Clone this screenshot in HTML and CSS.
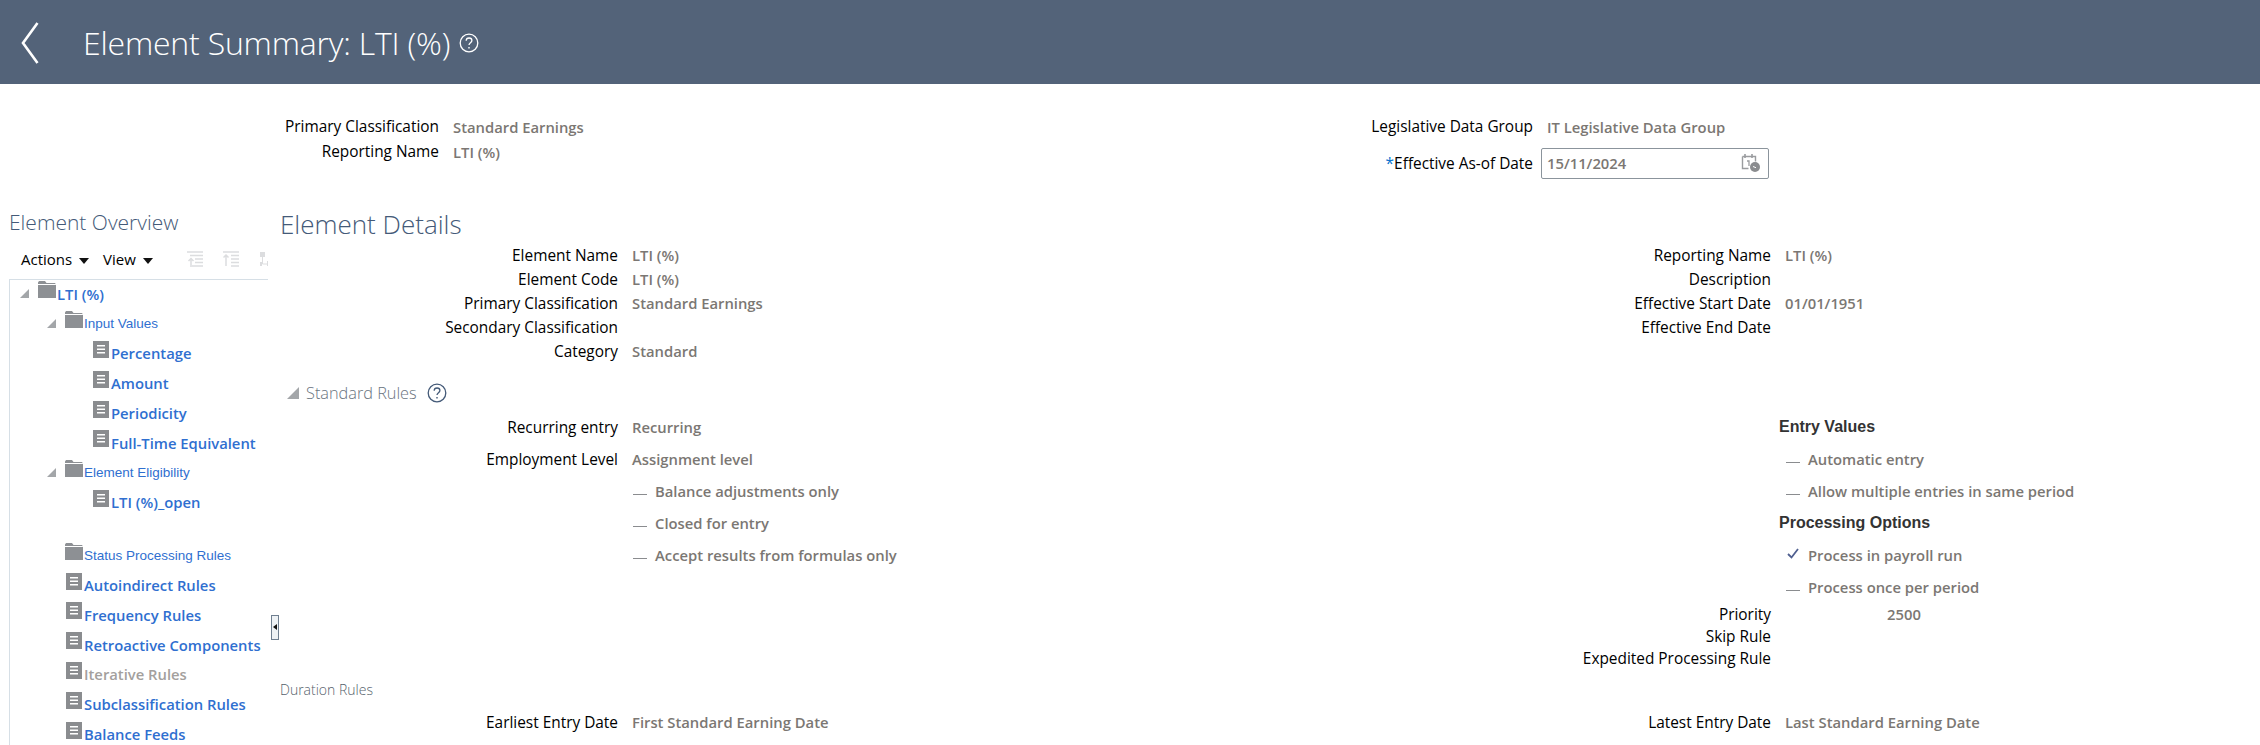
FILE: index.html
```html
<!DOCTYPE html>
<html lang="en">
<head>
  <meta charset="UTF-8" />
  <meta name="viewport" content="width=device-width, initial-scale=1" />
  <title>Element Summary: LTI (%)</title>
  <link rel="stylesheet" href="styles.css">
</head>
<body>
  <svg class="sprites" aria-hidden="true">
    <symbol id="i-folder" viewBox="0 0 18 17">
      <path d="M0 3V1.5L1 0h6l1.5 2H17l1 1.5V3z" fill="#8d9094"/>
      <path d="M0 4h18v13H0z" fill="#8d9094"/>
    </symbol>
    <symbol id="i-doc" viewBox="0 0 16 17">
      <path d="M0 0h16v17H0z" fill="#8a8c8f"/>
      <path d="M4 4h8v1.4H4zM4 7.5h8v1.4H4zM4 11h8v1.4H4z" fill="#fff"/>
    </symbol>
    <symbol id="i-twisty" viewBox="0 0 9 9">
      <path d="M9 0v9H0z" fill="#a3a6a9"/>
    </symbol>
    <symbol id="i-help" viewBox="0 0 20 20">
      <circle cx="10" cy="10" r="8.8" fill="none" stroke="currentColor" stroke-width="1.3"/>
      <path d="M7.2 7.8c0-1.7 1.2-2.8 2.9-2.8s2.8 1 2.8 2.4c0 2.3-2.9 2.3-2.9 4.7" fill="none" stroke="currentColor" stroke-width="1.3"/>
      <path d="M9.3 14h1.4v1.5H9.3z" fill="currentColor"/>
    </symbol>
  </svg>

  <header class="topbar">
    <svg class="back" viewBox="0 0 18 42"><path d="M16.5 1 2 21l14.5 20" fill="none" stroke="#fff" stroke-width="2.6"/></svg>
    <h1>Element Summary: LTI (%)</h1>
    <svg class="help-top"><use href="#i-help"/></svg>
  </header>

  <section class="summary">
    <div class="form-grid summary-left">
      <span class="lbl">Primary Classification</span><span class="val">Standard Earnings</span>
      <span class="lbl">Reporting Name</span><span class="val">LTI (%)</span>
    </div>
    <div class="form-grid summary-right">
      <span class="lbl">Legislative Data Group</span><span class="val">IT Legislative Data Group</span>
      <span class="lbl"><span class="req">*</span>Effective As-of Date</span>
      <div class="date-input">
        <span class="val">15/11/2024</span>
        <svg class="cal" viewBox="0 0 20 20">
          <path d="M1.5 3.5h13v5M1.5 3.5v12h6" fill="none" stroke="#9a9c9f" stroke-width="1.4"/>
          <path d="M4 1v4M11 1v4" stroke="#9a9c9f" stroke-width="1.6"/>
          <path d="M6 8h2v5" fill="none" stroke="#9a9c9f" stroke-width="1.3"/>
          <circle cx="14" cy="14" r="5" fill="#8a8c8f"/>
          <path d="M12 13.5l3 1.2" stroke="#fff" stroke-width="1"/>
        </svg>
      </div>
    </div>
  </section>

  <div class="columns">
    <aside class="overview">
      <h2 class="overview-title">Element Overview</h2>
      <div class="toolbar">
        <span class="menu">Actions <i class="caret"></i></span>
        <span class="menu">View <i class="caret"></i></span>
        <svg class="tool" viewBox="0 0 16 16"><path d="M0 1h16M3 4.5h13M8 8h8M8 11.5h8M3 15h13M4 7v7M1.5 10 4 7.5 6.5 10" fill="none" stroke="#dcdddf" stroke-width="1.5"/></svg>
        <svg class="tool" viewBox="0 0 16 16"><path d="M0 1h16M8 4.5h8M8 8h8M8 11.5h8M8 15h8M3 4v11M.5 6.5 3 4l2.5 2.5" fill="none" stroke="#dcdddf" stroke-width="1.5"/></svg>
        <svg class="tool" viewBox="0 0 16 16"><path d="M1 1h5v5H1zM10 1h2v2h-2zM1 11h2v4H1zM8 10h5v5H8z" fill="#dcdddf"/><path d="M3.5 6v7H8" fill="none" stroke="#dcdddf"/></svg>
      </div>
      <ul class="tree">
        <li class="node lvl0"><svg class="twisty"><use href="#i-twisty"/></svg><svg class="folder"><use href="#i-folder"/></svg><a class="link-root">LTI (%)</a></li>
        <li class="node lvl1"><svg class="twisty"><use href="#i-twisty"/></svg><svg class="folder"><use href="#i-folder"/></svg><a class="link-group">Input Values</a></li>
        <li class="node lvl2"><svg class="doc"><use href="#i-doc"/></svg><a class="link">Percentage</a></li>
        <li class="node lvl2"><svg class="doc"><use href="#i-doc"/></svg><a class="link">Amount</a></li>
        <li class="node lvl2"><svg class="doc"><use href="#i-doc"/></svg><a class="link">Periodicity</a></li>
        <li class="node lvl2"><svg class="doc"><use href="#i-doc"/></svg><a class="link">Full-Time Equivalent</a></li>
        <li class="node lvl1"><svg class="twisty"><use href="#i-twisty"/></svg><svg class="folder"><use href="#i-folder"/></svg><a class="link-group">Element Eligibility</a></li>
        <li class="node lvl2"><svg class="doc"><use href="#i-doc"/></svg><a class="link">LTI (%)_open</a></li>
        <li class="node lvl1 node-gap"><span class="twisty"></span><svg class="folder"><use href="#i-folder"/></svg><a class="link-group">Status Processing Rules</a></li>
        <li class="node lvl1b"><svg class="doc"><use href="#i-doc"/></svg><a class="link">Autoindirect Rules</a></li>
        <li class="node lvl1b"><svg class="doc"><use href="#i-doc"/></svg><a class="link">Frequency Rules</a></li>
        <li class="node lvl1b"><svg class="doc"><use href="#i-doc"/></svg><a class="link">Retroactive Components</a></li>
        <li class="node lvl1b"><svg class="doc"><use href="#i-doc"/></svg><a class="link disabled">Iterative Rules</a></li>
        <li class="node lvl1b"><svg class="doc"><use href="#i-doc"/></svg><a class="link">Subclassification Rules</a></li>
        <li class="node lvl1b"><svg class="doc"><use href="#i-doc"/></svg><a class="link">Balance Feeds</a></li>
      </ul>
    </aside>

    <div class="splitter-col"><button class="splitter" aria-label="Collapse pane"></button></div>

    <main class="details">
      <h2 class="details-title">Element Details</h2>
      <div class="two-col">
        <div class="form-grid col-left rows-24">
          <span class="lbl">Element Name</span><span class="val">LTI (%)</span>
          <span class="lbl">Element Code</span><span class="val">LTI (%)</span>
          <span class="lbl">Primary Classification</span><span class="val">Standard Earnings</span>
          <span class="lbl">Secondary Classification</span><span class="val"></span>
          <span class="lbl">Category</span><span class="val">Standard</span>
        </div>
        <div class="form-grid col-right rows-24">
          <span class="lbl">Reporting Name</span><span class="val">LTI (%)</span>
          <span class="lbl">Description</span><span class="val"></span>
          <span class="lbl">Effective Start Date</span><span class="val">01/01/1951</span>
          <span class="lbl">Effective End Date</span><span class="val"></span>
        </div>
      </div>

      <div class="section-head">
        <svg class="twisty-lg"><use href="#i-twisty"/></svg>
        <span>Standard Rules</span>
        <svg class="help-sec"><use href="#i-help"/></svg>
      </div>

      <div class="two-col rules">
        <div class="form-grid col-left rows-32">
          <span class="lbl">Recurring entry</span><span class="val">Recurring</span>
          <span class="lbl">Employment Level</span><span class="val">Assignment level</span>
          <span></span><span class="val flag"><i class="dash"></i>Balance adjustments only</span>
          <span></span><span class="val flag"><i class="dash"></i>Closed for entry</span>
          <span></span><span class="val flag"><i class="dash"></i>Accept results from formulas only</span>
        </div>
        <div class="col-right">
          <div class="options">
            <h3>Entry Values</h3>
            <span class="val flag"><i class="dash"></i>Automatic entry</span>
            <span class="val flag"><i class="dash"></i>Allow multiple entries in same period</span>
            <h3>Processing Options</h3>
            <span class="val flag"><svg class="check" viewBox="0 0 12 11"><path d="M1 6l3.5 3.5L11 1" fill="none" stroke="#4f5f8f" stroke-width="1.8"/></svg>Process in payroll run</span>
            <span class="val flag"><i class="dash"></i>Process once per period</span>
          </div>
          <div class="form-grid rows-22">
            <span class="lbl">Priority</span><span class="val priority">2500</span>
            <span class="lbl">Skip Rule</span><span class="val"></span>
            <span class="lbl">Expedited Processing Rule</span><span class="val"></span>
          </div>
        </div>
      </div>

      <h4 class="sub-head">Duration Rules</h4>
      <div class="two-col">
        <div class="form-grid col-left rows-24">
          <span class="lbl">Earliest Entry Date</span><span class="val">First Standard Earning Date</span>
        </div>
        <div class="form-grid col-right rows-24">
          <span class="lbl">Latest Entry Date</span><span class="val">Last Standard Earning Date</span>
        </div>
      </div>
    </main>
  </div>
</body>
</html>
```

FILE: styles.css
```css
* {
  box-sizing: border-box; margin: 0; padding: 0;
}
html, body {
  height: 745px;
  overflow: hidden;
}
body {
  font-family: 'Open Sans', 'Noto Sans', sans-serif;
  font-size: 15px;
  background: white;
  color: #000;
}
.sprites {
  display: none;
}
.topbar {
  height: 84px;
  background: #536379;
  display: flex;
  align-items: center;
  padding-left: 21px;
  color: white;
}
.back {
  width: 18px;
  height: 42px;
  margin-right: 44px;
  margin-top: 2px;
}
.topbar h1 {
  font-size: 32px;
  font-weight: 300;
  letter-spacing: -0.2px;
}
.help-top {
  width: 20px;
  height: 20px;
  margin-left: 9px;
  margin-top: 1px;
}

/* top summary */
.summary {
  height: 116px;
  padding-top: 30px;
  display: flex;
}
.form-grid {
  display: grid;
  column-gap: 14px;
  align-content: start;
  align-items: center;
}
.summary-left {
  grid-template-columns: 439px 300px;
  grid-auto-rows: 25px;
}
.summary-right {
  margin-left: 341px;
  grid-template-columns: 439px auto;
  grid-template-rows: 25px 48px;
}
.lbl {
  text-align: right;
  font-weight: 500;
  font-size: 15.4px;
  white-space: nowrap;
}
.val {
  color: #7b7773;
  font-weight: 600;
  font-size: 14.8px;
  white-space: nowrap;
}
.req {
  color: #0572ce;
}
.date-input {
  margin-left: -6px;
  width: 228px;
  height: 31px;
  border: 1px solid #8b949c;
  border-radius: 2px;
  display: flex;
  align-items: center;
  justify-content: space-between;
  padding: 0 7px 0 5px;
}
.date-input .cal {
  width: 20px;
  height: 20px;
}

/* main layout */
.columns {
  display: flex;
}
.overview {
  width: 268px;
  flex: none;
  overflow: hidden;
  padding-left: 9px;
}
.overview-title {
  font-size: 21px;
  font-weight: 300;
  color: #445a78;
  line-height: 44px;
}
.toolbar {
  height: 35px;
  padding-bottom: 5px;
  display: flex;
  align-items: center;
  padding-left: 12px;
  white-space: nowrap;
}
.menu {
  font-size: 15px;
  margin-right: 14px;
}
.caret {
  display: inline-block;
  border-left: 5px solid transparent;
  border-right: 5px solid transparent;
  border-top: 6px solid #111;
  margin-left: 3px;
  vertical-align: 1px;
}
.tool {
  width: 16px;
  height: 16px;
  flex: none;
  margin-right: 20px;
}
.menu + .tool {
  margin-left: 20px;
}
.tree {
  list-style: none;
  border-top: 1px solid #d6dfe6;
  border-left: 1px solid #d6dfe6;
  width: 300px;
}
.node {
  height: 29.8px;
  padding-bottom: 2px;
  display: flex;
  align-items: center;
  white-space: nowrap;
}
.lvl0 { padding-left: 10px; }
.lvl1 { padding-left: 37px; }
.lvl1b { padding-left: 56px; }
.lvl2 { padding-left: 83px; }
.node-gap {
  margin-top: 23px;
}
.twisty {
  width: 9px;
  height: 9px;
  margin-right: 9px;
  flex: none;
}
.folder {
  width: 18px;
  height: 17px;
  margin-right: 1px;
  margin-bottom: 8px;
  flex: none;
}
.doc {
  width: 16px;
  height: 17px;
  margin-right: 2px;
  margin-bottom: 8px;
  flex: none;
}
.link, .link-root {
  color: #2f6fd0;
  font-weight: 600;
  font-size: 14.8px;
}
.link-group {
  color: #2f6fd0;
  font-family: 'Liberation Sans', sans-serif;
  font-size: 13.5px;
}
.link.disabled {
  color: #a3a09d;
}
.splitter-col {
  width: 12px;
  flex: none;
  padding-top: 415px;
  padding-left: 3px;
}
.splitter {
  display: block;
  width: 8px;
  height: 25px;
  border: 1px solid #6f7f90;
  background: #eef2f5;
  position: relative;
}
.splitter::after {
  content: "";
  position: absolute;
  left: 1px;
  top: 8px;
  border-right: 4px solid #111;
  border-top: 3px solid transparent;
  border-bottom: 3px solid transparent;
}
.details {
  flex: 1;
  min-width: 0;
}
.details-title {
  font-size: 26px;
  font-weight: 300;
  color: #445a78;
  height: 43px;
  line-height: 48px;
}
.two-col {
  display: flex;
}
.col-left {
  width: 870px;
  grid-template-columns: 338px auto;
}
.col-right {
  width: 900px;
}
.col-right.form-grid, .col-right .form-grid {
  grid-template-columns: 621px auto;
}
.rows-24 { grid-auto-rows: 24px; }
.rows-32 { grid-auto-rows: 32px; }
.rows-22 { grid-auto-rows: 22px; }
.section-head {
  height: 36px;
  margin-top: 12px;
  display: flex;
  align-items: center;
  padding-left: 7px;
  font-weight: 300;
  font-size: 16.3px;
  color: #6a7480;
}
.twisty-lg {
  width: 12px;
  height: 12px;
  margin-right: 7px;
}
.help-sec {
  width: 20px;
  height: 20px;
  margin-left: 10px;
  color: #445a78;
}
.rules {
  height: 269px;
}
.flag {
  display: flex;
  align-items: center;
}
.dash {
  display: block;
  flex: none;
  width: 14px;
  height: 1px;
  margin: 7px 8px 0 1px;
  background: #8a8c8f;
}
.check {
  flex: none;
  width: 12px;
  height: 11px;
  margin: 0 9px 3px 2px;
}
.options {
  margin-left: 629px;
  display: flex;
  flex-direction: column;
}
.options h3 {
  font-family: 'Liberation Sans', sans-serif;
  font-size: 16px;
  font-weight: 700;
  color: #333;
  height: 32px;
  line-height: 32px;
}
.options .flag {
  height: 32px;
  margin-left: 6px;
}
.priority {
  padding-left: 102px;
}
.sub-head {
  font-size: 14px;
  font-weight: 300;
  color: #555f6b;
  height: 30px;
}
```
